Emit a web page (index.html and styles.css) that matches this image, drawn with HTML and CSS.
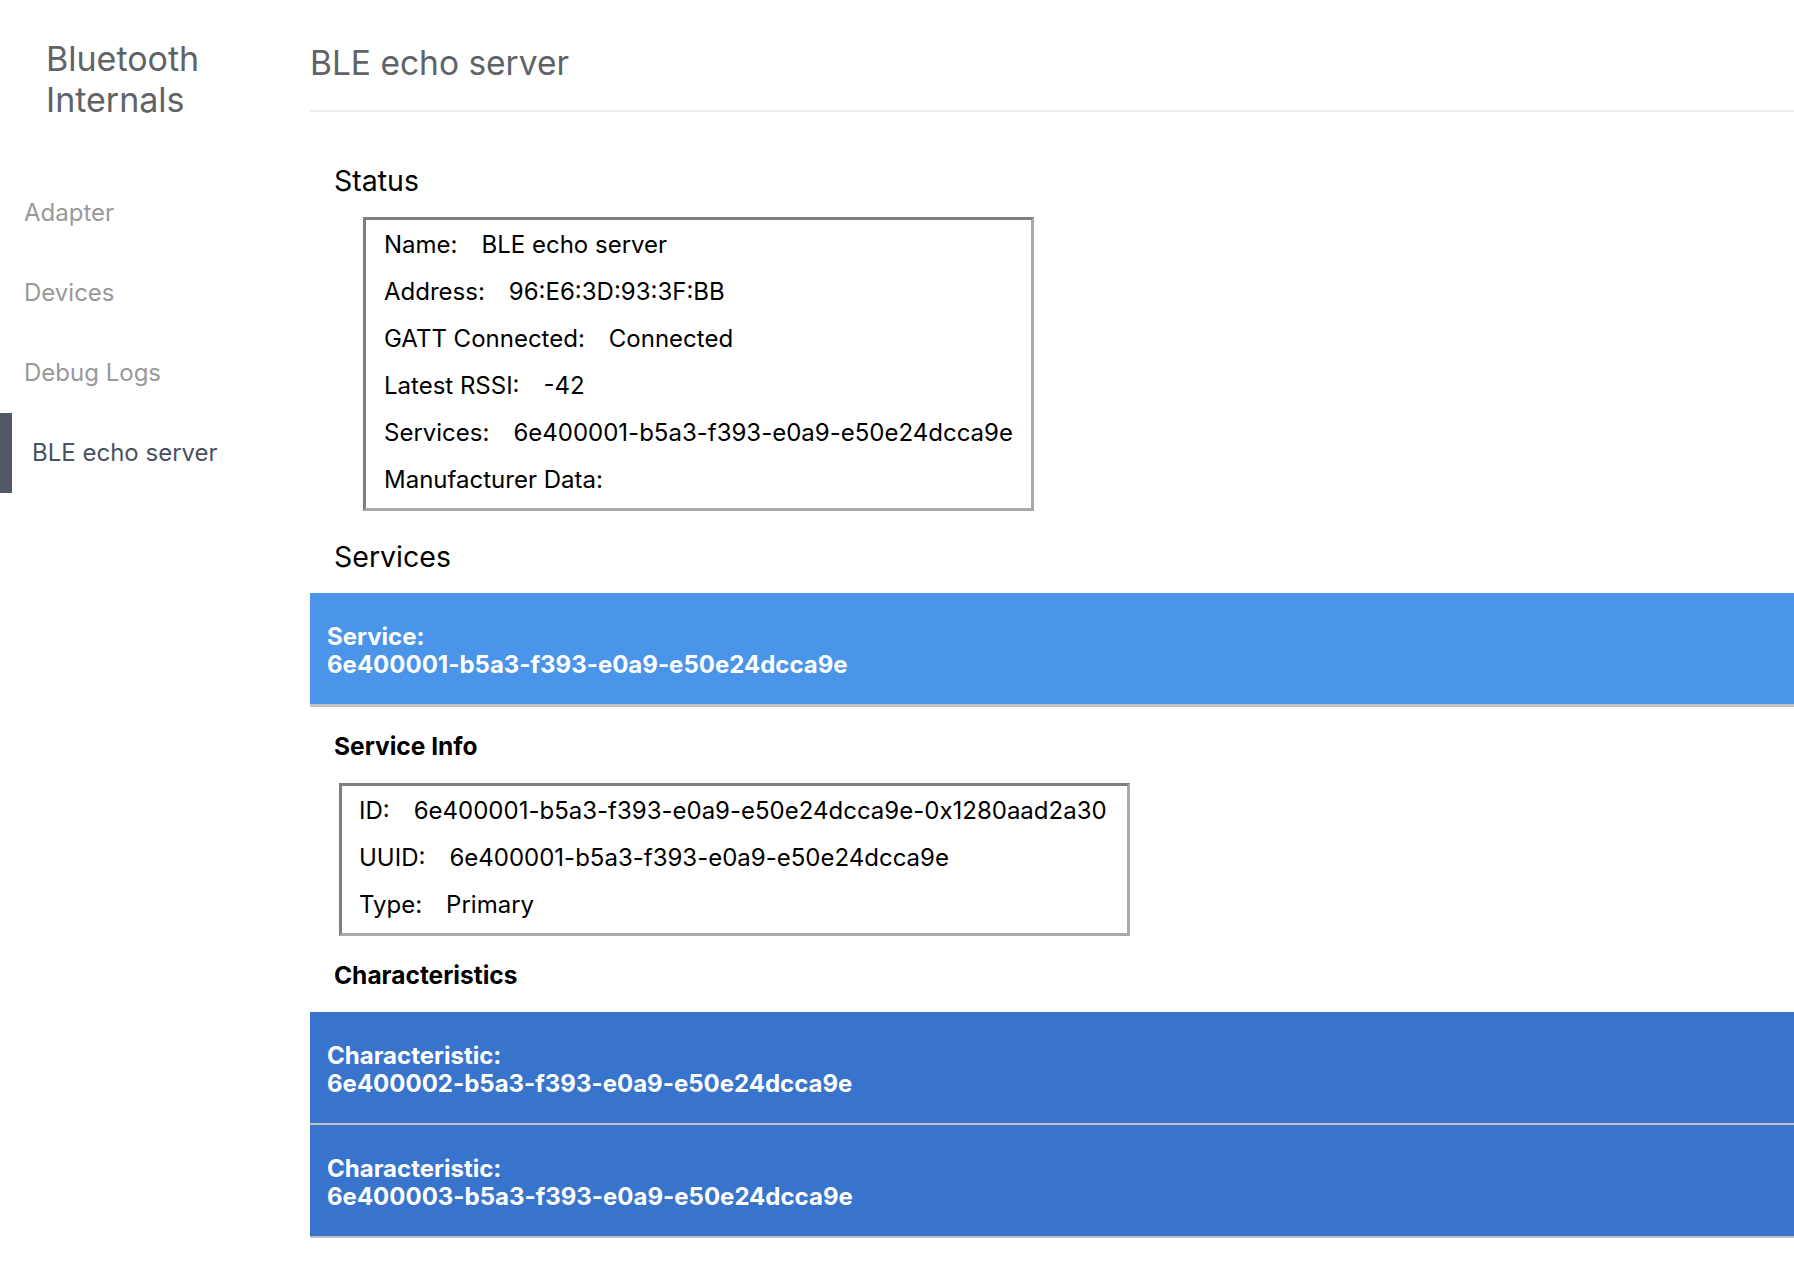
FILE: index.html
```html
<!DOCTYPE html>
<html>
<head>
<meta charset="utf-8">
<title>Bluetooth Internals</title>
<link rel="stylesheet" href="styles.css">
</head>
<body>
<div class="app">
  <aside class="sidebar">
    <h1 class="side-title">Bluetooth<br>Internals</h1>
    <nav class="nav">
      <div class="nav-item">Adapter</div>
      <div class="nav-item">Devices</div>
      <div class="nav-item">Debug Logs</div>
      <div class="nav-item active">BLE echo server</div>
    </nav>
  </aside>
  <main class="main">
    <header class="page-header">
      <h1 class="page-title">BLE echo server</h1>
    </header>
    <section class="section">
      <h2 class="h2">Status</h2>
      <div class="fieldset status-box">
        <div class="row"><span class="label">Name:</span><span class="value">BLE echo server</span></div>
        <div class="row"><span class="label">Address:</span><span class="value">96:E6:3D:93:3F:BB</span></div>
        <div class="row"><span class="label">GATT Connected:</span><span class="value">Connected</span></div>
        <div class="row"><span class="label">Latest RSSI:</span><span class="value">-42</span></div>
        <div class="row"><span class="label">Services:</span><span class="value">6e400001-b5a3-f393-e0a9-e50e24dcca9e</span></div>
        <div class="row"><span class="label">Manufacturer Data:</span><span class="value"></span></div>
      </div>
      <h2 class="h2 services-h">Services</h2>
    </section>
    <div class="bar service-bar">
      <div>Service:</div>
      <div>6e400001-b5a3-f393-e0a9-e50e24dcca9e</div>
    </div>
    <section class="section">
      <h3 class="h3">Service Info</h3>
      <div class="fieldset info-box">
        <div class="row"><span class="label">ID:</span><span class="value">6e400001-b5a3-f393-e0a9-e50e24dcca9e-0x1280aad2a30</span></div>
        <div class="row"><span class="label">UUID:</span><span class="value">6e400001-b5a3-f393-e0a9-e50e24dcca9e</span></div>
        <div class="row"><span class="label">Type:</span><span class="value">Primary</span></div>
      </div>
      <h3 class="h3 char-h">Characteristics</h3>
    </section>
    <div class="bar char-bar">
      <div>Characteristic:</div>
      <div>6e400002-b5a3-f393-e0a9-e50e24dcca9e</div>
    </div>
    <div class="bar char-bar">
      <div>Characteristic:</div>
      <div>6e400003-b5a3-f393-e0a9-e50e24dcca9e</div>
    </div>
  </main>
</div>
</body>
</html>
```

FILE: styles.css
```css
html, body {
  margin: 0;
  padding: 0;
  background: #ffffff;
}
body {
  font-family: Inter, "Noto Sans", sans-serif;
  color: #000;
}
.app {
  display: flex;
  min-height: 1282px;
}
.sidebar {
  width: 310px;
  flex: none;
}
.side-title {
  margin: 38px 0 0 46px;
  font-size: 34px;
  font-weight: 400;
  line-height: 41px;
  color: #5f6368;
}
.nav {
  margin-top: 53px;
  display: flex;
  flex-direction: column;
}
.nav-item {
  height: 80px;
  line-height: 80px;
  padding-left: 24px;
  font-size: 24px;
  color: #999999;
}
.nav-item.active {
  border-left: 12px solid #525866;
  padding-left: 20px;
  color: #4a5160;
}
.main {
  flex: 1;
  min-width: 0;
}
.page-header {
  border-bottom: 2px solid #ececec;
  height: 112px;
  box-sizing: border-box;
}
.page-title {
  margin: 0;
  padding-top: 43px;
  font-size: 33.5px;
  line-height: 40px;
  font-weight: 400;
  color: #5f6368;
}
.section {
  padding-left: 24px;
}
.h2 {
  margin: 0;
  padding-top: 51px;
  font-size: 28.5px;
  line-height: 36px;
  font-weight: 400;
}
.fieldset {
  display: inline-block;
  border: 3px solid #7f7f7f;
  border-right-color: #a9a9a9;
  border-bottom-color: #a9a9a9;
  box-sizing: border-box;
}
.status-box {
  margin: 18px 0 0 29px;
  padding: 1px 18px 5px 18px;
}
.info-box {
  margin: 22px 0 0 5px;
  padding: 1px 20px 5px 17px;
}
.row {
  height: 47px;
  line-height: 47px;
  font-size: 24px;
  white-space: nowrap;
}
.label {
  margin-right: 24px;
}
.services-h {
  padding-top: 28px;
  padding-bottom: 18px;
}
.bar {
  padding: 30px 17px 25px;
  color: #fff;
  font-weight: 700;
  font-size: 24px;
  line-height: 28px;
  border-bottom: 3px solid #c2c2c2;
}
.service-bar {
  background: #4a95ea;
}
.char-bar {
  background: #3874cb;
  border-bottom-width: 2px;
}
.h3 {
  margin: 0;
  padding-top: 24px;
  font-size: 24.5px;
  line-height: 30px;
  font-weight: 700;
}
.char-h {
  padding-top: 24px;
  padding-bottom: 22px;
}
```
